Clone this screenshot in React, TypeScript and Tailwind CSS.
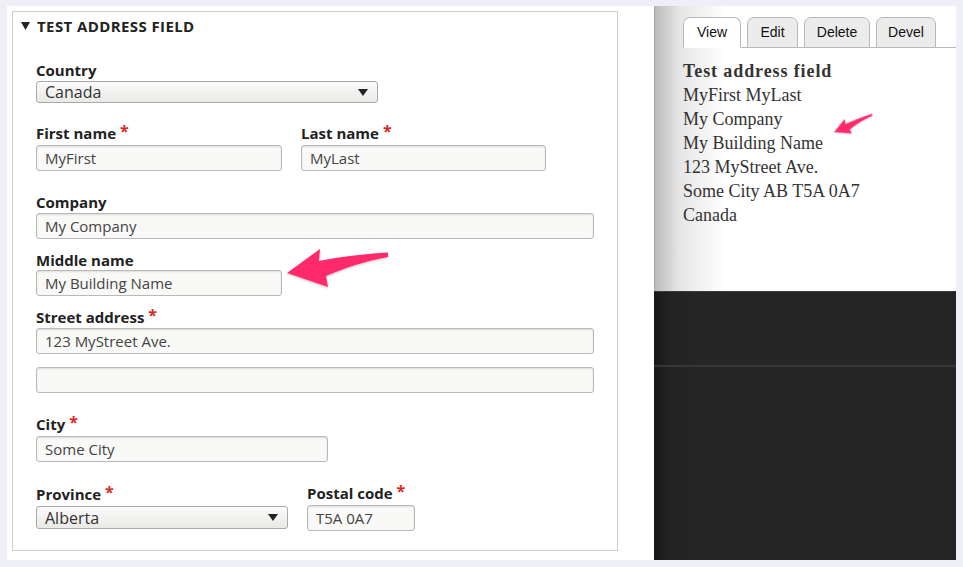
import React from "react";

const sans = { fontFamily: '"Open Sans", "DejaVu Sans", sans-serif' };

function Req() {
  return <span className="text-[#e0261c] ml-[4px] relative top-[-2px] text-[16px] leading-none">*</span>;
}

function Label({ children, req, mt }: { children: React.ReactNode; req?: boolean; mt: string }) {
  return (
    <div className={`${mt} h-[18px] leading-[18px] text-[15px] font-bold text-[#222] flex items-center`}>
      <span>{children}</span>
      {req && <Req />}
    </div>
  );
}

function Input({ value, w, mt }: { value?: string; w: string; mt: string }) {
  return (
    <div
      className={`${mt} ${w} h-[26px] border border-[#b9b9b9] rounded-[3px] bg-[#f9f9f7] shadow-[inset_0_1px_2px_rgba(0,0,0,0.12)] pl-[8px] flex items-center text-[15px] text-[#444]`}
    >
      {value}
    </div>
  );
}

function Select({ value, w, h, mt }: { value: string; w: string; h: string; mt: string }) {
  return (
    <div
      className={`${mt} ${w} ${h} border border-[#a9a9a9] rounded-[3px] bg-[linear-gradient(to_bottom,#fbfbfa,#e9e9e6)] pl-[8px] pr-[9px] flex items-center justify-between text-[16px] text-[#333]`}
    >
      <span className="leading-[20px]">{value}</span>
      <svg width="10" height="7" viewBox="0 0 10 7">
        <path d="M0 0 L10 0 L5 7 Z" fill="#222" />
      </svg>
    </div>
  );
}

function Tab({ label, w, active }: { label: string; w: string; active?: boolean }) {
  return (
    <div
      className={`${w} h-[31px] mb-[-1px] border border-[#b8b8b8] rounded-t-[7px] flex items-center justify-center pb-[1px] text-[14px] text-[#111] ${
        active ? "bg-white border-b-white" : "bg-[#ececec] border-b-[#b8b8b8]"
      }`}
      style={{ fontFamily: '"Liberation Sans", Arial, sans-serif' }}
    >
      {label}
    </div>
  );
}

export default function App() {
  return (
    <div className="relative w-[963px] h-[567px] bg-[#efeff8] pt-[6px] pl-[7px] pr-[7px] pb-[7px] overflow-hidden">
      <div className="flex h-[554px]">
        {/* Left form area */}
        <div className="w-[647px] h-full bg-white pl-[5px] pt-[5px]" style={sans}>
          <div className="w-[606px] h-[540px] border border-[#cfcfcf] flex flex-col">
            <div className="mt-[4px] pl-[8px] h-[20px] flex items-center text-[15px] font-bold text-[#222] tracking-[0.4px]">
              <svg width="9" height="8" viewBox="0 0 9 8" className="mr-[7px]">
                <path d="M0 0 L9 0 L4.5 8 Z" fill="#222" />
              </svg>
              TEST ADDRESS FIELD
            </div>
            <div className="pl-[23px] flex flex-col">
              <Label mt="mt-[25px]">Country</Label>
              <Select value="Canada" w="w-[342px]" h="h-[22px]" mt="mt-[2px]" />

              <div className="flex gap-[19px] mt-[21px]">
                <div className="flex flex-col">
                  <Label mt="mt-0" req>First name</Label>
                  <Input value="MyFirst" w="w-[246px]" mt="mt-[3px]" />
                </div>
                <div className="flex flex-col">
                  <Label mt="mt-0" req>Last name</Label>
                  <Input value="MyLast" w="w-[245px]" mt="mt-[3px]" />
                </div>
              </div>

              <Label mt="mt-[22px]">Company</Label>
              <Input value="My Company" w="w-[558px]" mt="mt-[2px]" />

              <Label mt="mt-[12px]">Middle name</Label>
              <Input value="My Building Name" w="w-[246px]" mt="mt-[1px]" />

              <Label mt="mt-[12px]" req>Street address</Label>
              <Input value="123 MyStreet Ave." w="w-[558px]" mt="mt-[2px]" />
              <Input w="w-[558px]" mt="mt-[13px]" />

              <Label mt="mt-[22px]" req>City</Label>
              <Input value="Some City" w="w-[292px]" mt="mt-[3px]" />

              <div className="flex gap-[19px] mt-[23px]">
                <div className="flex flex-col">
                  <Label mt="mt-0" req>Province</Label>
                  <Select value="Alberta" w="w-[252px]" h="h-[23px]" mt="mt-[3px]" />
                </div>
                <div className="flex flex-col">
                  <Label mt="mt-[-1px]" req>Postal code</Label>
                  <Input value="T5A 0A7" w="w-[108px]" mt="mt-[3px]" />
                </div>
              </div>
            </div>
          </div>
        </div>

        {/* Right panel */}
        <div className="w-[302px] h-full flex flex-col">
          <div className="h-[285px] border-l border-[#a8a8a8] bg-[linear-gradient(to_right,#bcbcbc_0px,#e6e6e6_25px,#ffffff_70px)] pl-[28px] pt-[11px] flex flex-col">
            <div className="flex items-end gap-[6px] border-b border-[#b8b8b8]">
              <Tab label="View" w="w-[58px]" active />
              <Tab label="Edit" w="w-[51px]" />
              <Tab label="Delete" w="w-[66px]" />
              <Tab label="Devel" w="w-[60px]" />
            </div>
            <div
              className="mt-[11px] text-[18px] leading-[24px] text-[#333]"
              style={{ fontFamily: '"Liberation Serif", "Times New Roman", serif' }}
            >
              <div className="font-bold tracking-[0.9px]">Test address field</div>
              <div>MyFirst MyLast</div>
              <div>My Company</div>
              <div>My Building Name</div>
              <div>123 MyStreet Ave.</div>
              <div>Some City AB T5A 0A7</div>
              <div>Canada</div>
            </div>
          </div>
          <div className="flex-1 bg-[linear-gradient(to_right,#171717_0px,#222222_14px,#252525_40px)] border-t border-[#3a3a3a] flex flex-col">
            <div className="h-[73px]" />
            <div className="h-[2px] bg-[#363636]" />
          </div>
        </div>
      </div>

      {/* Annotation arrows */}
      <svg className="absolute left-0 top-0 pointer-events-none" width="963" height="567" viewBox="0 0 963 567">
        <defs>
          <filter id="sh" x="-20%" y="-20%" width="140%" height="140%">
            <feDropShadow dx="0" dy="1" stdDeviation="1" floodColor="#000" floodOpacity="0.25" />
          </filter>
        </defs>
        <path
          d="M287 273 L320 249 L319 261 C345 256 365 254 388 252.5 L388 257 C365 261 345 268 326 276 L328 287 Z"
          fill="#ff2a6a"
          filter="url(#sh)"
        />
        <g transform="translate(834 132) rotate(-14) scale(0.41) translate(-287 -273)">
          <path
            d="M287 273 L320 249 L319 261 C345 256 365 254 388 252.5 L388 257 C365 261 345 268 326 276 L328 287 Z"
            fill="#ff2a6a"
            filter="url(#sh)"
          />
        </g>
      </svg>
    </div>
  );
}
